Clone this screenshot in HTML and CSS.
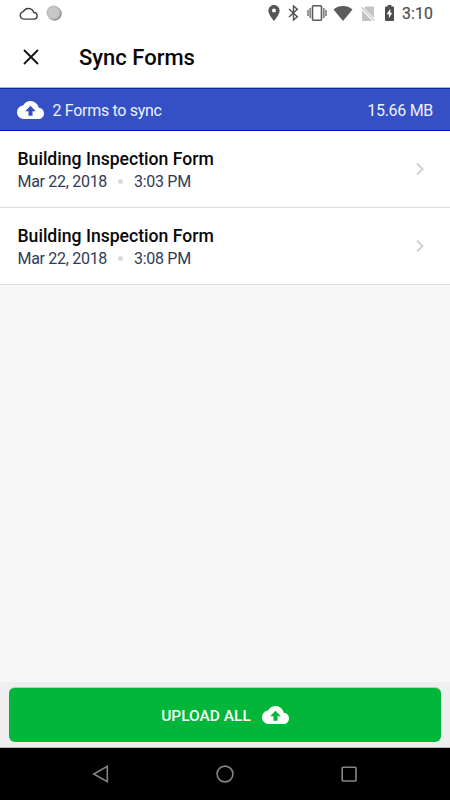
FILE: index.html
```html
<!DOCTYPE html>
<html lang="en">
<head>
<meta charset="utf-8">
<title>Sync Forms</title>
<link rel="stylesheet" href="styles.css">
</head>
<body>
<svg class="defs" aria-hidden="true">
  <symbol id="cloud-upload" viewBox="0 4 24 16"><path d="M19.35 10.04C18.67 6.59 15.64 4 12 4 9.11 4 6.6 5.64 5.35 8.04 2.34 8.36 0 10.91 0 14c0 3.31 2.69 6 6 6h13c2.76 0 5-2.24 5-5 0-2.64-2.05-4.78-4.65-4.96zM13.8 13v4.1h-3.6V13H7.3L12 8.2l4.7 4.8h-2.9z"/></symbol>
  <symbol id="chevron" viewBox="0 0 10 14"><path d="M2 1.5 7.5 7 2 12.5" fill="none" stroke="#d0d0d0" stroke-width="2"/></symbol>
</svg>
<div class="screen">
  <div class="status">
    <svg class="st-cloud" width="19" height="13" viewBox="0 0 19 13"><path d="M4.7 12.1A3.8 3.8 0 0 1 4.3 4.6 5.6 5.6 0 0 1 14.7 5.5 3.3 3.3 0 0 1 15 12.1Z" fill="none" stroke="#424242" stroke-width="1.4"/></svg>
    <svg class="st-disc" width="16" height="16" viewBox="0 0 16 16"><circle cx="8.5" cy="8.5" r="7.2" fill="#888"/><circle cx="7.5" cy="7.5" r="7" fill="#c8c8c8"/><circle cx="7.5" cy="7.5" r="5.9" fill="none" stroke="#aaa" stroke-width="1" stroke-dasharray="1 1"/></svg>
    <span class="spacer"></span>
    <svg class="st-pin" width="12" height="16" viewBox="5 2 14 20"><path fill="#555" d="M12 2C8.13 2 5 5.13 5 9c0 5.25 7 13 7 13s7-7.75 7-13c0-3.87-3.13-7-7-7zm0 9.5a2.5 2.5 0 1 1 0-5 2.5 2.5 0 0 1 0 5z"/></svg>
    <svg class="st-bt" width="11" height="16" viewBox="0 0 11 16"><path d="M1 4 9.3 11.8 5.5 15V1L9.3 4.2 1 12" fill="none" stroke="#555" stroke-width="1.5"/></svg>
    <svg class="st-vibrate" width="20" height="16" viewBox="0 0 20 16"><path d="M1 5v6M3.1 3v10M16.9 3v10M19 5v6" stroke="#555" stroke-width="1.2"/><rect x="5.5" y=".8" width="9" height="14.4" rx="1" fill="none" stroke="#5a5a5a" stroke-width="1.6"/></svg>
    <svg class="st-wifi" width="20" height="15" viewBox="0 0 20 15"><path d="M10 15 .5 3.4C3.2 1.2 6.3 0 10 0s6.8 1.2 9.5 3.4Z" fill="#5c5c5c"/></svg>
    <svg class="st-sim" width="14" height="15" viewBox="0 0 14 15"><path d="M4.600.5H12a1 1 0 0 1 1 1V12L3.200 2.200ZM1 4.300 11.300 15H2a1 1 0 0 1-1-1Z" fill="#c4c4c4"/><path d="M.5 1.200 13.500 14.600" stroke="#c4c4c4" stroke-width="1.100"/></svg>
    <svg class="st-battery" width="9" height="16" viewBox="0 0 9 16"><path d="M2.700 0h3.600v1.400H8a1 1 0 0 1 1 1V15a1 1 0 0 1-1 1H1a1 1 0 0 1-1-1V2.400a1 1 0 0 1 1-1h1.700Z" fill="#4d4d4d"/><path d="M5.300 3.800 1.700 9.300h2.200v4l3.400-5.500H5.300Z" fill="#fff"/></svg>
    <span class="clock">3:10</span>
  </div>
  <header class="appbar">
    <svg width="16" height="16" viewBox="0 0 16 16"><path d="m1 1 14 14M15 1 1 15" stroke="#111" stroke-width="1.8"/></svg>
    <h1>Sync Forms</h1>
  </header>
  <div class="summary">
    <svg class="upload"><use href="#cloud-upload"/></svg>
    <span class="count">2 Forms to sync</span>
    <span class="size">15.66 MB</span>
  </div>
  <main>
    <div class="row">
      <div class="entry"><div class="name">Building Inspection Form</div><div class="meta"><span>Mar 22, 2018</span><i class="dot"></i><span>3:03 PM</span></div></div>
      <svg class="chevron"><use href="#chevron"/></svg>
    </div>
    <div class="row">
      <div class="entry"><div class="name">Building Inspection Form</div><div class="meta"><span>Mar 22, 2018</span><i class="dot"></i><span>3:08 PM</span></div></div>
      <svg class="chevron"><use href="#chevron"/></svg>
    </div>
  </main>
  <footer class="actions">
    <button class="upload-all"><span class="label">UPLOAD ALL</span><svg class="upload"><use href="#cloud-upload"/></svg></button>
  </footer>
  <nav class="navbar">
    <svg width="18" height="18" viewBox="0 0 18 18"><path d="M15.3 1.4v15.2L1.8 9Z"/></svg>
    <svg width="18" height="18" viewBox="0 0 18 18"><circle cx="9" cy="9" r="7.9"/></svg>
    <svg width="18" height="18" viewBox="0 0 18 18"><rect x="2.2" y="2.2" width="13.8" height="13.8" rx=".8"/></svg>
  </nav>
</div>
</body>
</html>
```

FILE: styles.css
```css
* { box-sizing: border-box; }
body { margin: 0; font-family: Roboto, sans-serif; color: #08080a; }
svg { display: block; flex: none; }
.defs { display: none; }
.screen { width: 450px; height: 800px; display: flex; flex-direction: column; background: #f7f7f7; overflow: hidden; }
.status { height: 28px; flex: none; display: flex; align-items: center; background: #fff; padding: 0 17px 2px 19px; }
.st-disc { margin-left: 8px; }
.spacer { flex: 1; }
.st-bt { margin-left: 8px; }
.st-vibrate { margin-left: 8px; }
.st-wifi { margin-left: 6px; }
.st-sim { margin-left: 8px; }
.st-battery { margin-left: 10px; }
.clock { margin-left: 8px; width: 31px; font-size: 15.8px; line-height: 18px; color: #4c4c4c; letter-spacing: .1px; white-space: nowrap; padding-top: 2px; -webkit-text-stroke: .2px #4c4c4c; }
.appbar { height: 59px; flex: none; display: flex; align-items: center; background: #fff; padding: 0 0 1px 23px; }
.appbar h1 { margin: 2px 0 0 40px; font-size: 22px; line-height: 28px; font-weight: 500; }
.summary { height: 44px; flex: none; display: flex; align-items: center; background: #3450c4; border-top: 1px solid #a9b5da; border-bottom: 1px solid #0014b8; box-shadow: inset 0 1px #0b2aa0; padding: 3px 17px 1px; color: #eef1ff; font-size: 16px; letter-spacing: -.3px; }
.upload { width: 27px; height: 18px; fill: #fff; }
.count { margin-left: 8.5px; }
.size { margin-left: auto; }
main { flex: 1; }
.row { height: 77px; background: #fff; border-bottom: 1px solid #dedede; display: flex; align-items: center; justify-content: space-between; padding: 0 25px 0 17.5px; }
.entry { padding-top: 3px; }
.name { font-size: 17.6px; line-height: 22px; font-weight: 500; }
.meta { display: flex; align-items: center; font-size: 16px; letter-spacing: -.3px; line-height: 23px; color: #303b59; }
.dot { width: 5px; height: 5px; border-radius: 50%; background: #d9dade; margin: 0 11px; }
.chevron { width: 10px; height: 14px; }
.actions { height: 66px; flex: none; background: #efefef; border-bottom: 1px solid #b5b5b5; padding: 5px 9px; }
.upload-all { width: 100%; height: 55px; border: 0; border-top: 1px solid #b9cdbb; border-radius: 6px; background: #02b63a; color: #fff; font: 500 15.5px/20px Roboto, sans-serif; display: flex; align-items: center; justify-content: center; gap: 11px; padding: 0; }
.label { padding-top: 1px; }
.navbar { height: 52px; flex: none; background: #000; display: flex; align-items: center; justify-content: space-between; padding: 0 92px; }
.navbar svg { fill: none; stroke: #858585; stroke-width: 1.6; }
```
